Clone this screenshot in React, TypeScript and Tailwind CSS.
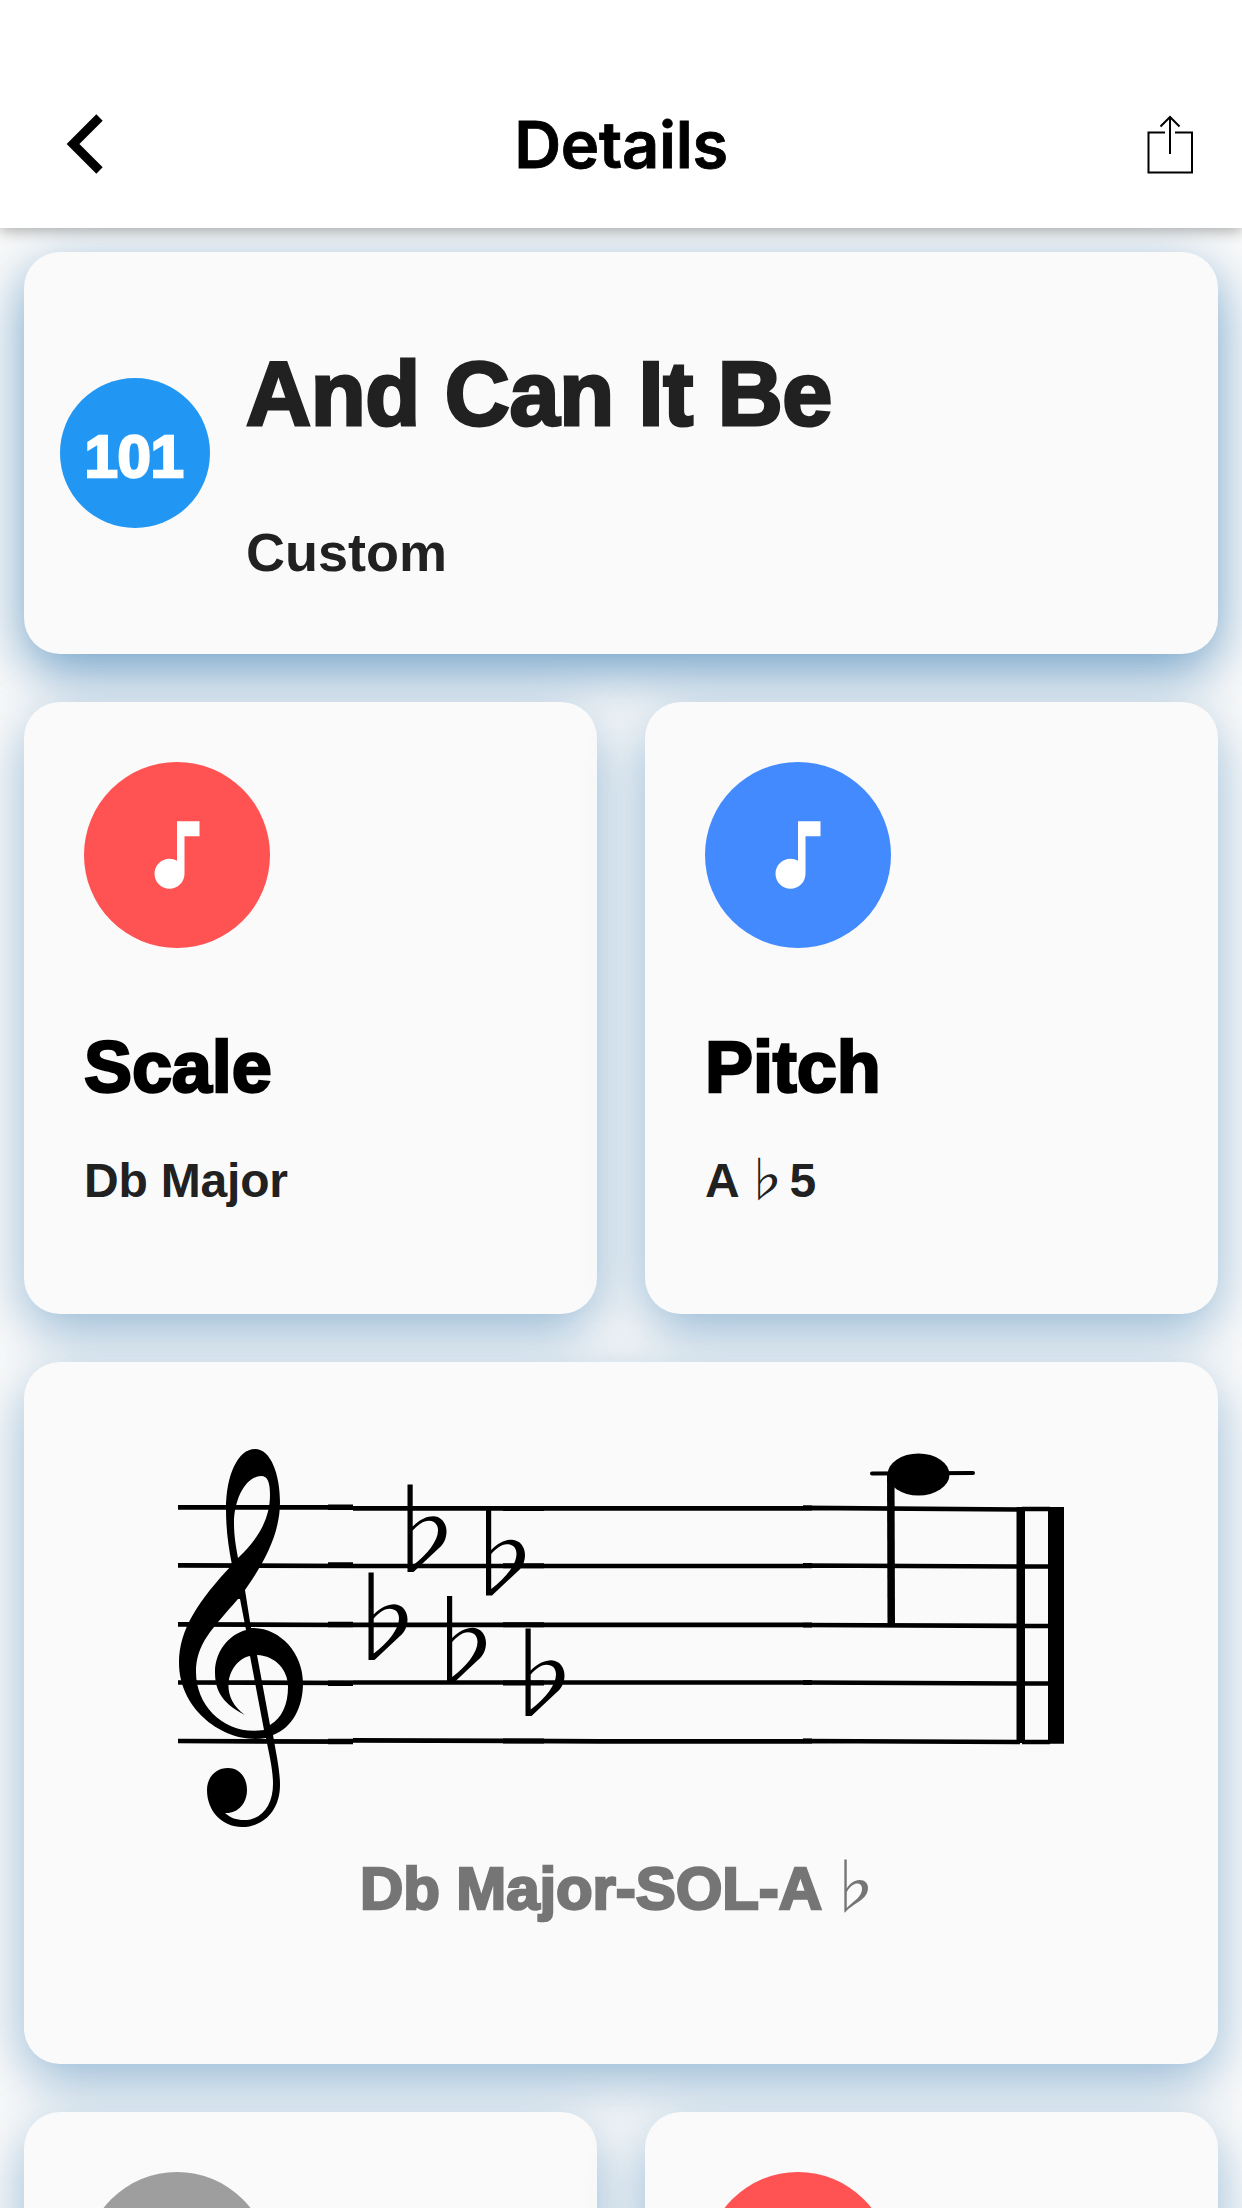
import React from "react";
import { MdMusicNote } from "react-icons/md";

const card = "rounded-[36px] bg-[#fafafa] ";
const soft = card + "shadow-[0_18px_54px_rgba(33,110,170,0.46)]";

function Disc({ color }: { color: string }) {
  return (
    <div className={"flex size-[186px] shrink-0 items-center justify-center rounded-full " + color}>
      <MdMusicNote className="size-[90px] text-white" />
    </div>
  );
}

function InfoCard({ color, title, children }: { color: string; title: string; children: React.ReactNode }) {
  return (
    <div className={"h-[612px] flex-1 px-[60px] pt-[60px] " + soft}>
      <Disc color={color} />
      <div className="mt-[71px] text-[72px] leading-[96px] font-bold tracking-[-0.1px] whitespace-nowrap text-black [-webkit-text-stroke:2.5px_#000]">
        {title}
      </div>
      <div className="mt-[38px] h-[56px] text-[48px] leading-[56px] font-bold tracking-[-0.2px] whitespace-nowrap text-[#212121]">
        {children}
      </div>
    </div>
  );
}

function Flat({ x, y }: { x: number; y: number }) {
  return (
    <g transform={`translate(${x} ${y})`}>
      <path
        fillRule="evenodd"
        d="M0 0H5.200V42C12 35 19 31.700 26 31.700C34 32 39 39 39 47C39 54 36 60 31 64L6 87.500H0ZM5.200 46C10 41 15 36.300 21 36.300C27 36.300 30.500 40 30.500 46C30.500 56 20 70 5.200 81Z"
      />
    </g>
  );
}

function Staff() {
  return (
    <svg className="block h-[400px] w-[900px]" viewBox="170 1440 900 400" fill="#000">
      <g fill="none" stroke="#000" strokeWidth="4.700">
        <path d="M178 1507.300H353M353 1508.300H803M803 1507.800L1020 1509.500" />
        <path d="M178 1565.300L353 1566M353 1566H803M803 1565.500L1020 1566.500" />
        <path d="M178 1624.300L353 1625M353 1624.800H803M803 1625L1020 1625.800" />
        <path d="M178 1682.500L353 1683M353 1682.500H803M803 1682.500L1020 1683.500" />
        <path d="M178 1741L353 1741.700M353 1740.300L600 1741.300H803M803 1741L1020 1742" />
        <path d="M328 1507.300H353M328 1565H353M328 1624.500H353M328 1683.200H353M328 1741.500H353" strokeWidth="5.400" />
        <path d="M503 1508.500H544M503 1565.800H544M503 1624.700H544M503 1683H544M503 1741H544" strokeWidth="5" />
        <path d="M803 1508H812M803 1565.700H812M803 1625H812M803 1682.500H812M803 1741H812" strokeWidth="5.200" />
        <path d="M1022 1509H1050M1022 1566.500H1050M1022 1626H1050M1022 1683.500H1050M1022 1742H1050" />
      </g>
      <path d="M1016.500 1507H1025V1743H1016.500ZM1048 1507H1064V1743.700H1048Z" />
      <path
        fillRule="evenodd"
        d="M232 1565C228 1545 226 1528 226 1509C226 1475 238 1449 255 1449C271 1449 280 1475 280 1502C280 1534 264 1563 245 1590L251 1628C279 1627 303 1652 303 1683C303 1708 292 1728 273 1735C276 1753 280 1770 280 1785C280 1810 264 1827 242 1827C223 1827 207 1812 207 1790C207 1777 216 1768 228 1768C239 1768 247 1777 247 1790C247 1804 237 1814 225 1813C231 1818 236 1820 244 1820C262 1820 273 1805 273 1784C273 1769 269 1754 266 1738C226 1745 179 1711 179 1663C179 1629 199 1600 232 1565ZM238 1558C258 1539 270 1519 270 1495C270 1483 268 1476 261 1476C245 1477 234 1500 234 1523C234 1537 236 1546 238 1558ZM238 1599C212 1629 196 1644 196 1672C196 1708 227 1736 264 1730L250 1656C230 1660 216 1694 245 1715C219 1702 215 1687 215 1672C215 1652 228 1635 246 1630L240 1599ZM257 1655L270 1725C282 1718 288 1704 288 1687C288 1670 276 1656 257 1655Z"
      />
      <Flat x={407.5} y={1484.5} />
      <Flat x={486} y={1508} />
      <Flat x={368.5} y={1572.5} />
      <Flat x={447} y={1596} />
      <Flat x={525.5} y={1628.5} />
      <ellipse cx="918.500" cy="1474.500" rx="31" ry="21" />
      <path d="M872 1473.500L973 1473" stroke="#000" strokeWidth="4" strokeLinecap="round" />
      <path d="M887 1472H894.500L895 1626H887.500Z" />
    </svg>
  );
}

export default function App() {
  return (
    <div className="flex h-[2208px] w-full flex-col overflow-hidden bg-[#fafafa] font-['Liberation_Sans','Noto_Sans_CJK_JP',sans-serif]">
      <header className="z-10 flex h-[228px] shrink-0 items-end justify-between bg-white px-[44px] pb-[48px] shadow-[0_3px_14px_rgba(0,0,0,0.32)]">
        <svg className="h-[72px] w-[66px]" viewBox="44 108 66 72" fill="none" stroke="#000" strokeWidth="9">
          <path d="M99.500 117.500L73 144L99.500 170.500" />
        </svg>
        <h1 className="h-[72px] pt-[1px] font-[Inter,sans-serif] text-[65px] leading-[72px] font-semibold tracking-[-0.300px] text-black [-webkit-text-stroke:0.8px_#000]">
          Details
        </h1>
        <svg className="h-[72px] w-[66px]" viewBox="1132 108 66 72" fill="none" stroke="#000" strokeWidth="2">
          <path d="M1165 132.500H1148.500V172.500H1192V132.500H1175M1170 154V117M1160.500 126.500L1170 117L1179.500 126.500" />
        </svg>
      </header>
      <main className="flex flex-col gap-[48px] px-[24px] pt-[24px]">
        <section className={"flex h-[402px] shrink-0 items-center px-[36px] shadow-[0_18px_54px_rgba(33,110,170,0.64)] " + card}>
          <div className="flex size-[150px] shrink-0 items-center justify-center rounded-full bg-[#2196f3] pt-[8px] pr-[2px] text-[60px] font-bold tracking-[-0.300px] text-white [-webkit-text-stroke:2.5px_#fff]">
            101
          </div>
          <div className="ml-[36px] pt-[20px] text-[#212121]">
            <div className="text-[90px] leading-[102px] font-bold tracking-[-0.300px] whitespace-nowrap [-webkit-text-stroke:3px_#212121]">
              And Can It Be
            </div>
            <div className="mt-[76px] text-[54px] leading-[62px] font-bold">Custom</div>
          </div>
        </section>
        <section className="flex shrink-0 gap-[48px]">
          <InfoCard color="bg-[#ff5252]" title="Scale">
            Db Major
          </InfoCard>
          <InfoCard color="bg-[#448aff]" title="Pitch">
            A<span className="font-normal [word-spacing:-11px]"> ♭</span>5
          </InfoCard>
        </section>
        <section className={"flex h-[702px] shrink-0 flex-col px-[146px] pt-[78px] " + soft}>
          <Staff />
          <div className="mt-[13px] ml-[190px] text-[60px] leading-[72px] font-bold tracking-[-0.100px] whitespace-nowrap text-[#757575] [-webkit-text-stroke:2.5px_#757575]">
            Db Major-SOL-A<span className="font-normal [-webkit-text-stroke:0px] [word-spacing:-15px]"> ♭</span>
          </div>
        </section>
        <section className="flex shrink-0 gap-[48px]">
          <InfoCard color="bg-[#9e9e9e]" title="">{""}</InfoCard>
          <InfoCard color="bg-[#ff5252]" title="">{""}</InfoCard>
        </section>
      </main>
    </div>
  );
}
